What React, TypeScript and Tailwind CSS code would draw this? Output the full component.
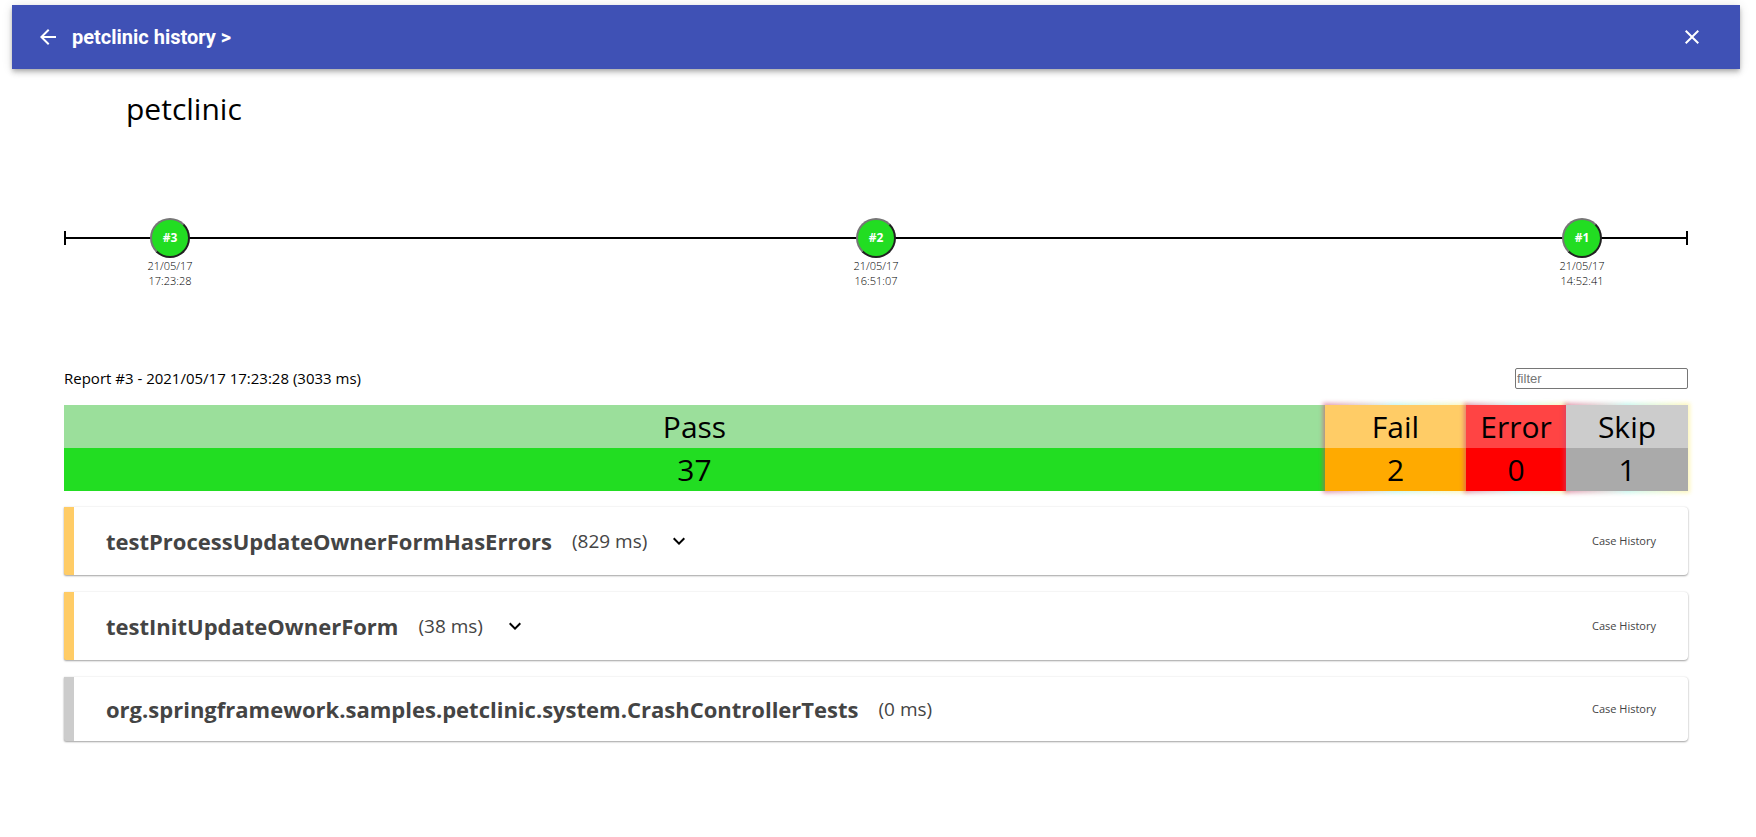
import { MdArrowBack, MdClose, MdExpandMore } from "react-icons/md";

const runs = [
  { id: 3, date: "21/05/17", time: "17:23:28" },
  { id: 2, date: "21/05/17", time: "16:51:07" },
  { id: 1, date: "21/05/17", time: "14:52:41" },
];

const glow =
  "relative isolate before:absolute before:-inset-[2px] before:-z-10 before:bg-linear-to-r before:from-[#cc407090] before:via-[#60e8d060] before:to-[#fff08090] before:blur-[2px]";

const totals = [
  { label: "Pass", count: 37, box: "min-w-0 flex-1", top: "bg-[#9bdf9b]", bottom: "bg-[#22dd22]" },
  { label: "Fail", count: 2, box: `w-[141px] ${glow}`, top: "bg-[#ffcc66]", bottom: "bg-[#ffaa00]" },
  { label: "Error", count: 0, box: `w-[100px] ${glow}`, top: "bg-[#ff4444]", bottom: "bg-[#ff0000]" },
  { label: "Skip", count: 1, box: `w-[122px] ${glow}`, top: "bg-[#cccccc]", bottom: "bg-[#aaaaaa]" },
];

const cases = [
  { name: "testProcessUpdateOwnerFormHasErrors", ms: 829, expandable: true, edge: "border-[#ffcc66]" },
  { name: "testInitUpdateOwnerForm", ms: 38, expandable: true, edge: "border-[#ffcc66]" },
  {
    name: "org.springframework.samples.petclinic.system.CrashControllerTests",
    ms: 0,
    expandable: false,
    edge: "border-[#cccccc]",
  },
];

function Header() {
  return (
    <header className="flex h-16 items-center bg-[#3f51b5] pr-9 pl-6 font-[Roboto,sans-serif] text-white shadow-[0_2px_4px_-1px_rgba(0,0,0,0.2),0_4px_5px_0_rgba(0,0,0,0.14),0_1px_10px_0_rgba(0,0,0,0.12)]">
      <button type="button" aria-label="Back" className="mr-3">
        <MdArrowBack size={24} />
      </button>
      <h1 className="text-xl font-bold">petclinic history &gt;</h1>
      <button type="button" aria-label="Close" className="ml-auto">
        <MdClose size={24} />
      </button>
    </header>
  );
}

function Timeline() {
  return (
    <section className="relative mt-[87px]">
      <div className="absolute inset-x-0 top-[13px] flex h-[14px] items-center border-x-2 border-black">
        <div className="h-[2px] w-full bg-black" />
      </div>
      <ol className="relative flex justify-between px-20">
        {runs.map((run) => (
          <li key={run.id} className="flex w-[52px] flex-col items-center">
            <button
              type="button"
              className="size-10 rounded-full border-2 border-t-[#767676] border-r-[#212121] border-b-[#212121] border-l-[#767676] bg-[#22dd22] text-xs font-bold text-white"
            >
              #{run.id}
            </button>
            <div className="text-center text-[11px] leading-[15px] font-light">
              {run.date}
              <br />
              {run.time}
            </div>
          </li>
        ))}
      </ol>
    </section>
  );
}

function Totals() {
  return (
    <dl className="mt-[15px] flex text-center text-[30px] leading-[43px]">
      {totals.map((t) => (
        <div key={t.label} className={t.box}>
          <dt className={t.top}>{t.label}</dt>
          <dd className={t.bottom}>{t.count}</dd>
        </div>
      ))}
    </dl>
  );
}

function Cases() {
  return (
    <ul className="mt-4 flex flex-col gap-[17px]">
      {cases.map((c) => (
        <li
          key={c.name}
          className={`flex items-center rounded-r-sm rounded-bl-xs border-l-10 ${c.edge} bg-white px-8 py-4 text-[#444444] shadow-[0_1px_2px_rgba(0,0,0,0.35),0_0_2px_rgba(0,0,0,0.1)]`}
        >
          <h3 className="text-[22px] leading-8 font-bold">{c.name}</h3>
          <span className="ml-5 text-[19px] leading-7">({c.ms} ms)</span>
          {c.expandable && (
            <button type="button" aria-label={`Expand ${c.name}`} className="ml-3.5 p-1.5 text-black">
              <MdExpandMore size={24} />
            </button>
          )}
          <a href="#history" className="ml-auto text-[11px]">
            Case History
          </a>
        </li>
      ))}
    </ul>
  );
}

export default function App() {
  return (
    <div className="bg-white pt-[5px] pr-4 pb-8 pl-3 font-['Open_Sans',sans-serif] text-black">
      <Header />
      <main className="px-[52px]">
        <h2 className="mt-[18px] ml-[62px] text-[30px] leading-[44px]">petclinic</h2>
        <Timeline />
        <div className="mt-[78px] flex items-center justify-between">
          <p className="text-[15px] leading-6">Report #3 - 2021/05/17 17:23:28 (3033 ms)</p>
          <input
            type="text"
            aria-label="filter"
            placeholder="filter"
            className="h-[21px] w-[173px] rounded-xs border border-[#767676] px-px font-['Liberation_Sans',sans-serif] text-[13px] placeholder:text-[#757575]"
          />
        </div>
        <Totals />
        <Cases />
      </main>
    </div>
  );
}
